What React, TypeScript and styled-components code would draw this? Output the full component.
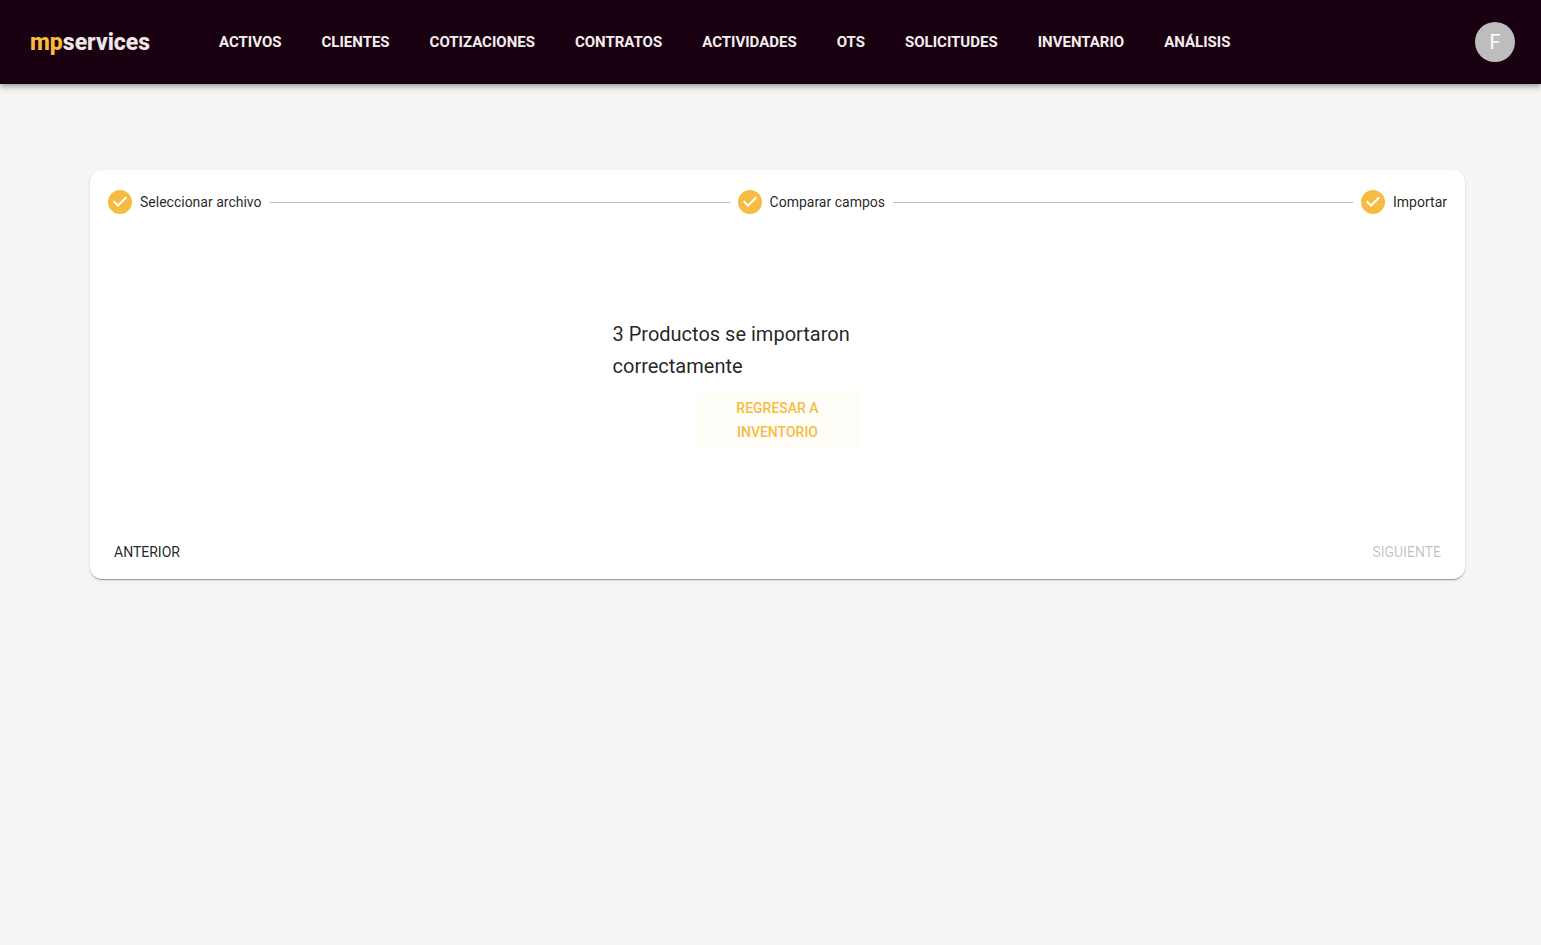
import React from "react";
import styled, { createGlobalStyle, css } from "styled-components";

const GlobalStyle = createGlobalStyle`
  *, *::before, *::after { box-sizing: border-box; }
  body {
    margin: 0;
    background: #f5f5f5;
    color: rgba(0, 0, 0, 0.87);
    font-family: Roboto, "Liberation Sans", sans-serif;
  }
`;

const Header = styled.header`
  display: flex;
  align-items: center;
  height: 84px;
  padding: 0 26px 0 30px;
  background: #1a0111;
  box-shadow: 0 2px 4px -1px rgba(0, 0, 0, 0.2), 0 4px 5px rgba(0, 0, 0, 0.14),
    0 1px 10px rgba(0, 0, 0, 0.12);
`;

const Logo = styled.a`
  flex: 0 0 189px;
  padding-top: 2px;
  color: #efe7e7;
  font-size: 23px;
  font-weight: 800;
  line-height: 28px;
  text-decoration: none;
`;

const LogoAccent = styled.span`
  color: #f9bc3c;
`;

const Nav = styled.nav`
  display: flex;
  flex: 1;
  gap: 40px;
`;

const NavLink = styled.a`
  color: #f4eeee;
  font-size: 15px;
  font-weight: 700;
  line-height: 24px;
  text-decoration: none;
  text-transform: uppercase;
`;

const Avatar = styled.button`
  width: 40px;
  height: 40px;
  padding: 0;
  border: 0;
  border-radius: 50%;
  background: #bdbdbd;
  color: #fff;
  font: 400 20px/40px Roboto, sans-serif;
`;

const Main = styled.main`
  padding: 86px 76px 86px 90px;
`;

const Card = styled.section`
  padding: 20px 0 9px;
  border-radius: 12px;
  background: #fff;
  box-shadow: 0 2px 1px -1px rgba(0, 0, 0, 0.2), 0 1px 1px rgba(0, 0, 0, 0.14),
    0 1px 3px rgba(0, 0, 0, 0.12);
`;

const Stepper = styled.ol`
  display: flex;
  align-items: center;
  gap: 8px;
  margin: 0;
  padding: 0 18px;
  list-style: none;
`;

const Step = styled.li<{ $connected: boolean }>`
  display: flex;
  align-items: center;
  gap: 8px;
  font-size: 14px;
  line-height: 24px;
  white-space: nowrap;

  ${({ $connected }) =>
    $connected &&
    css`
      flex: 1 1 auto;

      &::after {
        content: "";
        flex: 1;
        height: 1px;
        background: #bdbdbd;
      }
    `}
`;

const StepIcon = styled.svg`
  flex: none;
  width: 24px;
  height: 24px;
  fill: #f6bc42;
`;

const Result = styled.div`
  display: flex;
  flex-direction: column;
  align-items: center;
  gap: 8px;
  width: 24%;
  min-width: 300px;
  margin: 104px auto 84px;
`;

const Message = styled.p`
  width: 100%;
  margin: 0;
  font-size: 20px;
  line-height: 32px;
`;

const Button = styled.button`
  padding: 6px 8px;
  border: 0;
  border-radius: 4px;
  background: transparent;
  color: rgba(0, 0, 0, 0.87);
  font: 400 14px/24px Roboto, "Liberation Sans", sans-serif;
  text-transform: uppercase;

  &:disabled {
    color: rgba(0, 0, 0, 0.26);
  }
`;

const ReturnButton = styled(Button)`
  width: 50%;
  background: #fffdf8;
  color: #f6bc42;
  font-weight: 500;
`;

const Actions = styled.div`
  display: flex;
  justify-content: space-between;
  padding: 0 16px;
`;

const sections = [
  "Activos",
  "Clientes",
  "Cotizaciones",
  "Contratos",
  "Actividades",
  "OTs",
  "Solicitudes",
  "Inventario",
  "Análisis",
];

const steps = ["Seleccionar archivo", "Comparar campos", "Importar"];

export default function App() {
  return (
    <>
      <GlobalStyle />
      <Header>
        <Logo href="#">
          <LogoAccent>mp</LogoAccent>services
        </Logo>
        <Nav>
          {sections.map((name) => (
            <NavLink key={name} href="#">
              {name}
            </NavLink>
          ))}
        </Nav>
        <Avatar type="button">F</Avatar>
      </Header>
      <Main>
        <Card>
          <Stepper>
            {steps.map((label, i) => (
              <Step key={label} $connected={i < steps.length - 1}>
                <StepIcon viewBox="0 0 24 24" aria-hidden="true">
                  <path d="M12 0a12 12 0 1 0 0 24 12 12 0 0 0 0-24zm-2 17l-5-5 1.4-1.4 3.6 3.6 7.6-7.6L19 8l-9 9z" />
                </StepIcon>
                {label}
              </Step>
            ))}
          </Stepper>
          <Result>
            <Message>3 Productos se importaron correctamente</Message>
            <ReturnButton type="button">Regresar a inventorio</ReturnButton>
          </Result>
          <Actions>
            <Button type="button">Anterior</Button>
            <Button type="button" disabled>
              Siguiente
            </Button>
          </Actions>
        </Card>
      </Main>
    </>
  );
}
